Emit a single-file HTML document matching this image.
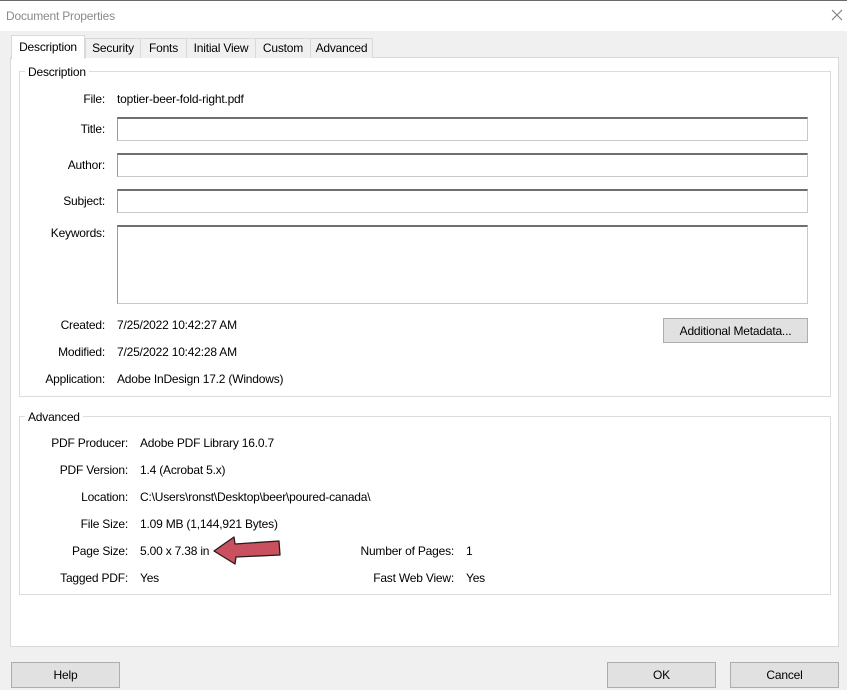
<!DOCTYPE html>
<html><head><style>
body{margin:0;width:847px;height:690px;background:#f0f0f0;position:relative;overflow:hidden;font-family:"Liberation Sans",sans-serif;font-size:12px;color:#000;letter-spacing:-0.2px}
.a{position:absolute;white-space:nowrap}
.r{position:absolute;white-space:nowrap;text-align:right;line-height:14px;margin-top:1px}
.v{position:absolute;white-space:nowrap;line-height:14px;margin-top:1px}
.in{position:absolute;background:#fff;border:1px solid #c8c8c8;border-top:2px solid #6e6e6e;border-left:1px solid #9a9a9a;box-sizing:border-box}
.btn{position:absolute;background:#e1e1e1;border:1px solid #adadad;box-sizing:border-box;text-align:center}
.tab{position:absolute;top:38px;height:20px;border:1px solid #d9d9d9;border-bottom:none;box-sizing:border-box;background:#f0f0f0;text-align:center;line-height:19px}
.grp{position:absolute;border:1px solid #dcdcdc;box-sizing:border-box}
.gl{position:absolute;background:#fff;padding:0 3px;line-height:14px}
</style></head><body>
<div class="a" style="left:0;top:0;width:847px;height:31px;background:#fff;border-top:1px solid #6a6a6a;box-sizing:border-box"></div>
<div class="a" style="left:6px;top:9px;color:#8a8a8a">Document Properties</div>
<svg class="a" style="left:831px;top:9px" width="12" height="12"><path d="M1 1L11 11M11 1L1 11" stroke="#777" stroke-width="1"/></svg>
<div class="a" style="left:10px;top:57px;width:829px;height:590px;background:#fff;border:1px solid #d9d9d9;box-sizing:border-box"></div>
<div class="tab" style="left:85px;width:56px">Security</div>
<div class="tab" style="left:140px;width:47px">Fonts</div>
<div class="tab" style="left:186px;width:70px">Initial View</div>
<div class="tab" style="left:255px;width:56px">Custom</div>
<div class="tab" style="left:310px;width:63px">Advanced</div>
<div class="tab" style="left:11px;top:35px;height:24px;width:74px;background:#fff;line-height:22px;border-color:#d9d9d9">Description</div>

<div class="grp" style="left:19px;top:71px;width:812px;height:326px"></div>
<div class="gl" style="left:25px;top:65px">Description</div>
<div class="r" style="right:742px;top:91px">File:</div>
<div class="v" style="left:117px;top:91px">toptier-beer-fold-right.pdf</div>
<div class="r" style="right:742px;top:121px">Title:</div>
<div class="in" style="left:117px;top:117px;width:691px;height:24px"></div>
<div class="r" style="right:742px;top:157px">Author:</div>
<div class="in" style="left:117px;top:153px;width:691px;height:24px"></div>
<div class="r" style="right:742px;top:193px">Subject:</div>
<div class="in" style="left:117px;top:189px;width:691px;height:24px"></div>
<div class="r" style="right:742px;top:225px">Keywords:</div>
<div class="in" style="left:117px;top:225px;width:691px;height:79px"></div>
<div class="r" style="right:742px;top:317px">Created:</div>
<div class="v" style="left:117px;top:317px">7/25/2022 10:42:27 AM</div>
<div class="r" style="right:742px;top:344px">Modified:</div>
<div class="v" style="left:117px;top:344px">7/25/2022 10:42:28 AM</div>
<div class="r" style="right:742px;top:371px">Application:</div>
<div class="v" style="left:117px;top:371px">Adobe InDesign 17.2 (Windows)</div>
<div class="btn" style="left:663px;top:318px;width:145px;height:25px;line-height:24px">Additional Metadata...</div>

<div class="grp" style="left:19px;top:416px;width:812px;height:179px"></div>
<div class="gl" style="left:25px;top:410px">Advanced</div>
<div class="r" style="right:719px;top:435px">PDF Producer:</div>
<div class="v" style="left:140px;top:435px">Adobe PDF Library 16.0.7</div>
<div class="r" style="right:719px;top:462px">PDF Version:</div>
<div class="v" style="left:140px;top:462px">1.4 (Acrobat 5.x)</div>
<div class="r" style="right:719px;top:489px">Location:</div>
<div class="v" style="left:140px;top:489px">C:\Users\ronst\Desktop\beer\poured-canada\</div>
<div class="r" style="right:719px;top:516px">File Size:</div>
<div class="v" style="left:140px;top:516px">1.09 MB (1,144,921 Bytes)</div>
<div class="r" style="right:719px;top:543px">Page Size:</div>
<div class="v" style="left:140px;top:543px">5.00 x 7.38 in</div>
<div class="r" style="right:719px;top:570px">Tagged PDF:</div>
<div class="v" style="left:140px;top:570px">Yes</div>
<div class="r" style="right:393px;top:543px">Number of Pages:</div>
<div class="v" style="left:466px;top:543px">1</div>
<div class="r" style="right:393px;top:570px">Fast Web View:</div>
<div class="v" style="left:466px;top:570px">Yes</div>
<svg class="a" style="left:0;top:0" width="847" height="690"><path d="M214 551L234 537L235 544L279 541L280 555L236 557L235 564Z" fill="#c9505e" stroke="#2a1a1a" stroke-width="1.3" stroke-linejoin="round"/></svg>

<div class="btn" style="left:11px;top:662px;width:109px;height:26px;line-height:25px">Help</div>
<div class="btn" style="left:607px;top:662px;width:109px;height:26px;line-height:25px">OK</div>
<div class="btn" style="left:730px;top:662px;width:109px;height:26px;line-height:25px">Cancel</div>
</body></html>
